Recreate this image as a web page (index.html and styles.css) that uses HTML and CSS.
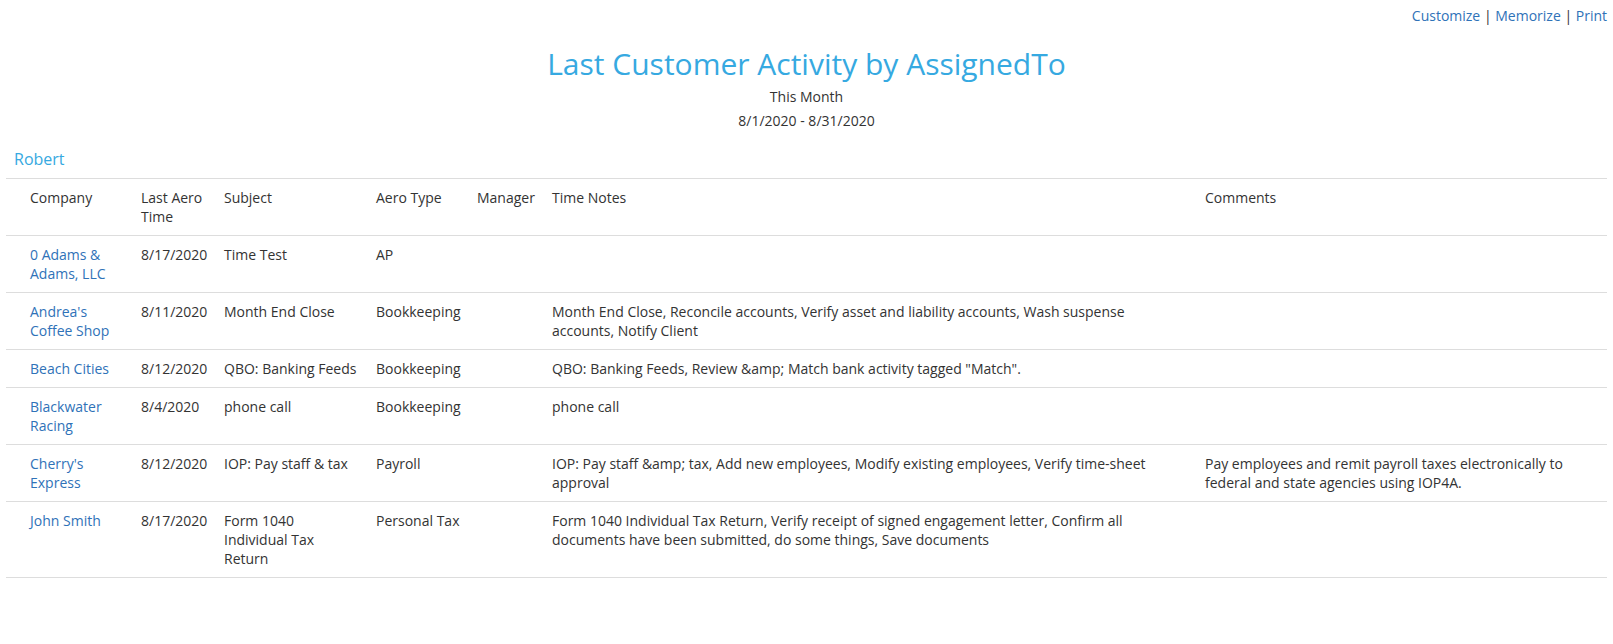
FILE: index.html
```html
<!DOCTYPE html>
<html lang="en">
<head>
<meta charset="utf-8">
<title>Last Customer Activity by AssignedTo</title>
<link rel="stylesheet" href="styles.css">
</head>
<body>
<div class="page">
  <div class="toolbar">
    <a href="#" class="tool-link">Customize</a> <span class="sep">|</span> <a href="#" class="tool-link">Memorize</a> <span class="sep">|</span> <a href="#" class="tool-link">Print</a>
  </div>
  <header class="report-header">
    <h1 class="report-title">Last Customer Activity by AssignedTo</h1>
    <div class="report-sub">This Month</div>
    <div class="report-sub">8/1/2020 - 8/31/2020</div>
  </header>
  <h2 class="group-title">Robert</h2>
  <table class="report-table">
    <colgroup>
      <col class="c-company">
      <col class="c-time">
      <col class="c-subject">
      <col class="c-type">
      <col class="c-manager">
      <col class="c-notes">
      <col class="c-comments">
    </colgroup>
    <thead>
      <tr>
        <th>Company</th>
        <th>Last Aero Time</th>
        <th>Subject</th>
        <th>Aero Type</th>
        <th>Manager</th>
        <th>Time Notes</th>
        <th class="comments">Comments</th>
      </tr>
    </thead>
    <tbody>
      <tr>
        <td><a href="#" class="company">0 Adams &amp; Adams, LLC</a></td>
        <td>8/17/2020</td>
        <td>Time Test</td>
        <td>AP</td>
        <td></td>
        <td></td>
        <td class="comments"></td>
      </tr>
      <tr>
        <td><a href="#" class="company">Andrea's Coffee Shop</a></td>
        <td>8/11/2020</td>
        <td>Month End Close</td>
        <td>Bookkeeping</td>
        <td></td>
        <td>Month End Close, Reconcile accounts, Verify asset and liability accounts, Wash suspense accounts, Notify Client</td>
        <td class="comments"></td>
      </tr>
      <tr>
        <td><a href="#" class="company">Beach Cities</a></td>
        <td>8/12/2020</td>
        <td>QBO: Banking Feeds</td>
        <td>Bookkeeping</td>
        <td></td>
        <td>QBO: Banking Feeds, Review &amp;amp; Match bank activity tagged "Match".</td>
        <td class="comments"></td>
      </tr>
      <tr>
        <td><a href="#" class="company">Blackwater Racing</a></td>
        <td>8/4/2020</td>
        <td>phone call</td>
        <td>Bookkeeping</td>
        <td></td>
        <td>phone call</td>
        <td class="comments"></td>
      </tr>
      <tr>
        <td><a href="#" class="company">Cherry's Express</a></td>
        <td>8/12/2020</td>
        <td>IOP: Pay staff &amp; tax</td>
        <td>Payroll</td>
        <td></td>
        <td>IOP: Pay staff &amp;amp; tax, Add new employees, Modify existing employees, Verify time-sheet approval</td>
        <td class="comments">Pay employees and remit payroll taxes electronically to federal and state agencies using IOP4A.</td>
      </tr>
      <tr>
        <td><a href="#" class="company">John Smith</a></td>
        <td>8/17/2020</td>
        <td>Form 1040 Individual Tax Return</td>
        <td>Personal Tax</td>
        <td></td>
        <td>Form 1040 Individual Tax Return, Verify receipt of signed engagement letter, Confirm all documents have been submitted, do some things, Save documents</td>
        <td class="comments"></td>
      </tr>
    </tbody>
  </table>
</div>
</body>
</html>
```

FILE: styles.css
```css
html, body {
  margin: 0;
  padding: 0;
  background: #ffffff;
}
body {
  font-family: "Open Sans", "Liberation Sans", sans-serif;
  font-size: 14px;
  color: #333333;
}
.page {
  padding: 0 6px;
}
.toolbar {
  text-align: right;
  padding-top: 6px;
  line-height: 20px;
  font-size: 14px;
}
.tool-link {
  color: #2f72b8;
  text-decoration: none;
}
.sep {
  color: #333333;
}
.report-header {
  text-align: center;
}
.report-title {
  margin: 18px 0 1px 0;
  font-size: 30px;
  font-weight: 400;
  line-height: 40px;
  color: #36a9e1;
}
.report-sub {
  line-height: 24px;
  font-size: 14px;
}
.group-title {
  margin: 14px 0 0 8px;
  font-size: 16px;
  font-weight: 400;
  line-height: 24px;
  color: #36a9e1;
}
.report-table {
  width: 100%;
  margin-top: 7px;
  border-collapse: collapse;
  table-layout: fixed;
  border-top: 1px solid #dddddd;
}
.c-company { width: 127px; }
.c-time { width: 83px; }
.c-subject { width: 152px; }
.c-type { width: 101px; }
.c-manager { width: 75px; }
.c-notes { width: 631px; }
.report-table th,
.report-table td {
  padding: 9px 8px;
  text-align: left;
  vertical-align: top;
  font-weight: 400;
  line-height: 19px;
  border-bottom: 1px solid #dddddd;
}
.report-table th:first-child,
.report-table td:first-child {
  padding-left: 24px;
}
.report-table .comments {
  padding-left: 30px;
}
.company {
  color: #2f72b8;
  text-decoration: none;
}
```
